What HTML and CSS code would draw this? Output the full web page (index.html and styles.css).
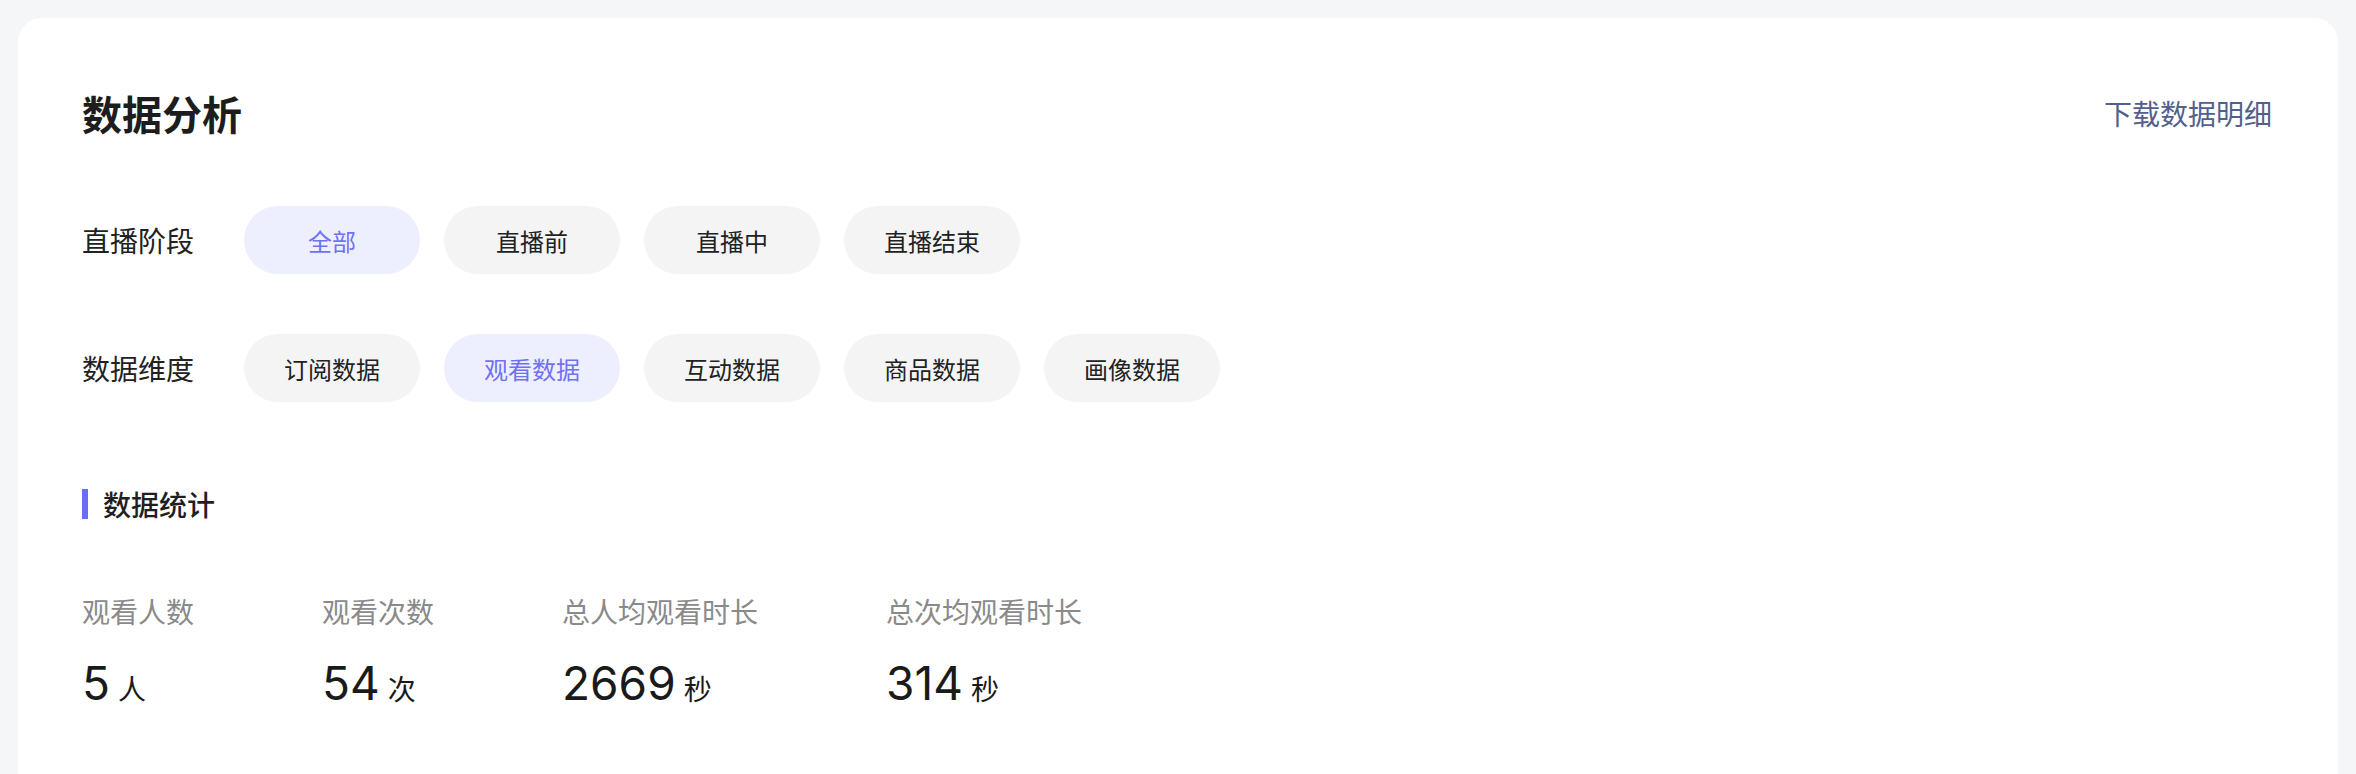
FILE: index.html
```html
<!DOCTYPE html>
<html lang="zh-CN">
<head>
<meta charset="utf-8">
<title>数据分析</title>
<link rel="stylesheet" href="styles.css">
</head>
<body>
<div class="card">
  <div class="header">
    <h1 class="title">数据分析</h1>
    <a class="download" href="#">下载数据明细</a>
  </div>

  <div class="filter-row first">
    <div class="filter-label">直播阶段</div>
    <div class="pills">
      <span class="pill active">全部</span>
      <span class="pill">直播前</span>
      <span class="pill">直播中</span>
      <span class="pill">直播结束</span>
    </div>
  </div>

  <div class="filter-row second">
    <div class="filter-label">数据维度</div>
    <div class="pills">
      <span class="pill">订阅数据</span>
      <span class="pill active">观看数据</span>
      <span class="pill">互动数据</span>
      <span class="pill">商品数据</span>
      <span class="pill">画像数据</span>
    </div>
  </div>

  <div class="section-title"><span class="bar"></span><span>数据统计</span></div>

  <div class="stats">
    <div class="stat">
      <div class="stat-label">观看人数</div>
      <div class="stat-value"><span class="num">5</span><span class="unit">人</span></div>
    </div>
    <div class="stat">
      <div class="stat-label">观看次数</div>
      <div class="stat-value"><span class="num">54</span><span class="unit">次</span></div>
    </div>
    <div class="stat">
      <div class="stat-label">总人均观看时长</div>
      <div class="stat-value"><span class="num">2669</span><span class="unit">秒</span></div>
    </div>
    <div class="stat">
      <div class="stat-label">总次均观看时长</div>
      <div class="stat-value"><span class="num">314</span><span class="unit">秒</span></div>
    </div>
  </div>
</div>
</body>
</html>
```
FILE: styles.css
```css
html, body {
  margin: 0;
  padding: 0;
}
body {
  background: #f5f6f7;
  padding: 18px;
  font-family: "Noto Sans CJK SC", "Noto Sans", sans-serif;
  color: #1f1f1f;
  overflow: hidden;
}
.card {
  background: #ffffff;
  border-radius: 24px;
  padding: 67px 64px 100px 64px;
  min-height: 800px;
  box-sizing: border-box;
}
.header {
  display: flex;
  align-items: center;
  justify-content: space-between;
  height: 56px;
}
.title {
  margin: 0;
  font-size: 40px;
  font-weight: 700;
  line-height: 56px;
  color: #1d1d1d;
}
.download {
  font-size: 28px;
  line-height: 40px;
  color: #52608c;
  text-decoration: none;
  margin-right: 2px;
}
.filter-row {
  display: flex;
  align-items: center;
  height: 68px;
}
.filter-row.first {
  margin-top: 65px;
}
.filter-row.second {
  margin-top: 60px;
}
.filter-label {
  width: 162px;
  font-size: 28px;
  line-height: 40px;
  color: #222222;
}
.pills {
  display: flex;
  gap: 24px;
}
.pill {
  width: 176px;
  height: 68px;
  border-radius: 34px;
  background: #f4f4f4;
  display: flex;
  align-items: center;
  justify-content: center;
  font-size: 24px;
  color: #222222;
}
.pill.active {
  background: #eeeffe;
  color: #6e71f2;
}
.section-title {
  margin-top: 82px;
  display: flex;
  align-items: center;
  gap: 15px;
  height: 40px;
  font-size: 28px;
  font-weight: 500;
  color: #1f1f1f;
}
.bar {
  width: 6px;
  height: 30px;
  background: #6b6ef0;
}
.stats {
  margin-top: 67px;
  display: flex;
  gap: 128px;
}
.stat-label {
  font-size: 28px;
  line-height: 40px;
  color: #8a8a8a;
}
.stat-value {
  margin-top: 24px;
  display: flex;
  align-items: baseline;
  line-height: 56px;
  color: #1a1a1a;
}
.num {
  font-family: Inter, "Liberation Sans", sans-serif;
  font-size: 46px;
  font-weight: 400;
}
.unit {
  font-size: 28px;
  margin-left: 8px;
}
```
